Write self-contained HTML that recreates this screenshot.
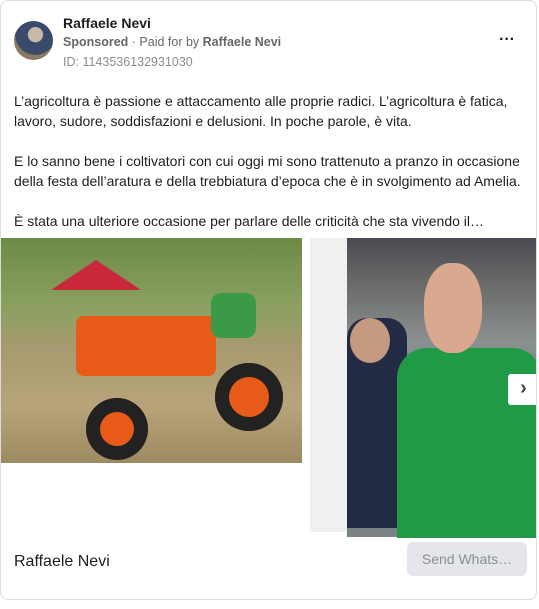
<!DOCTYPE html>
<html><head><meta charset="utf-8"><style>
body{margin:0;width:539px;height:609px;background:#fff;font-family:"Liberation Sans",sans-serif;overflow:hidden;position:relative}
.card{position:absolute;left:0;top:0;width:537px;height:600px;border:1px solid #dcdcdc;border-radius:8px;box-sizing:border-box;overflow:hidden;background:#fff}
.av{position:absolute;left:13px;top:20px;width:39px;height:39px;border-radius:50%;background:radial-gradient(circle at 55% 35%,#c8b8a8 0 22%,#3a4a6a 24% 60%,#8a7a60 62%)}
.name{position:absolute;left:62px;top:14px;font-weight:bold;font-size:14px;color:#1c1e21}
.sp{position:absolute;left:62px;top:34px;font-size:12.5px;color:#65676b}
.id{position:absolute;left:62px;top:54px;font-size:12.5px;color:#8a8d91}
.dots{position:absolute;left:498px;top:30px;font-size:16px;font-weight:bold;color:#1c1e21}
.txt{position:absolute;left:13px;top:90px;width:520px;font-size:14px;line-height:20px;color:#1c1e21}
.txt p{margin:0 0 20px}
</style></head><body><div class="card">
<div class="av"></div>
<div class="name">Raffaele Nevi</div>
<div class="sp"><b>Sponsored</b> · Paid for by <b>Raffaele Nevi</b></div>
<div class="id">ID: 1143536132931030</div>
<div class="dots">···</div>
<div class="txt"><p>L’agricoltura è passione e attaccamento alle proprie radici. L’agricoltura è fatica, lavoro, sudore, soddisfazioni e delusioni. In poche parole, è vita.</p><p>E lo sanno bene i coltivatori con cui oggi mi sono trattenuto a pranzo in occasione della festa dell’aratura e della trebbiatura d’epoca che è in svolgimento ad Amelia.</p><p>È stata una ulteriore occasione per parlare delle criticità che sta vivendo il…</p></div>
<div style="position:absolute;left:0;top:237px;width:301px;height:225px;background:linear-gradient(180deg,#6d8a45 0%,#8aa060 30%,#a89a70 50%,#b8a47a 75%,#9c8a60 100%)">
<div style="position:absolute;left:50px;top:22px;width:90px;height:30px;background:#c8283a;clip-path:polygon(50% 0,100% 100%,0 100%)"></div>
<div style="position:absolute;left:75px;top:78px;width:140px;height:60px;background:#e85a18;border-radius:8px"></div>
<div style="position:absolute;left:210px;top:55px;width:45px;height:45px;background:#3a9a48;border-radius:10px"></div>
<div style="position:absolute;left:85px;top:160px;width:62px;height:62px;border-radius:50%;background:#222;box-shadow:inset 0 0 0 14px #222,inset 0 0 0 40px #e85a18"></div>
<div style="position:absolute;left:214px;top:125px;width:68px;height:68px;border-radius:50%;background:#222;box-shadow:inset 0 0 0 14px #222,inset 0 0 0 40px #e85a18"></div>
</div>
<div style="position:absolute;left:309px;top:237px;width:230px;height:294px;background:#f0f0f0"></div>
<div style="position:absolute;left:346px;top:237px;width:193px;height:299px;background:linear-gradient(180deg,#4a4a52 0%,#6a6a6a 15%,#8a9090 35%,#6a7070 70%,#7a8484 100%)">
<div style="position:absolute;left:0;top:80px;width:60px;height:210px;background:#232b44;border-radius:20px 20px 0 0"></div>
<div style="position:absolute;left:3px;top:80px;width:40px;height:45px;background:#c49a80;border-radius:50%"></div>
<div style="position:absolute;left:50px;top:110px;width:145px;height:190px;background:#1f9a45;border-radius:30px 30px 0 0"></div>
<div style="position:absolute;left:77px;top:25px;width:58px;height:90px;background:#d9a88e;border-radius:45%"></div>
</div>
<div style="position:absolute;left:507px;top:373px;width:31px;height:31px;background:#fff;border-radius:3px 0 0 3px;color:#444;font-size:20px;font-weight:bold;text-align:center;line-height:29px">›</div>
<div style="position:absolute;left:13px;top:552px;font-size:16px;color:#1c1e21">Raffaele Nevi</div>
<div style="position:absolute;left:406px;top:541px;width:120px;height:34px;background:#e4e6eb;border-radius:6px;font-size:14px;color:#8a8d91;text-align:center;line-height:34px">Send Whats…</div>
</div></body></html>
